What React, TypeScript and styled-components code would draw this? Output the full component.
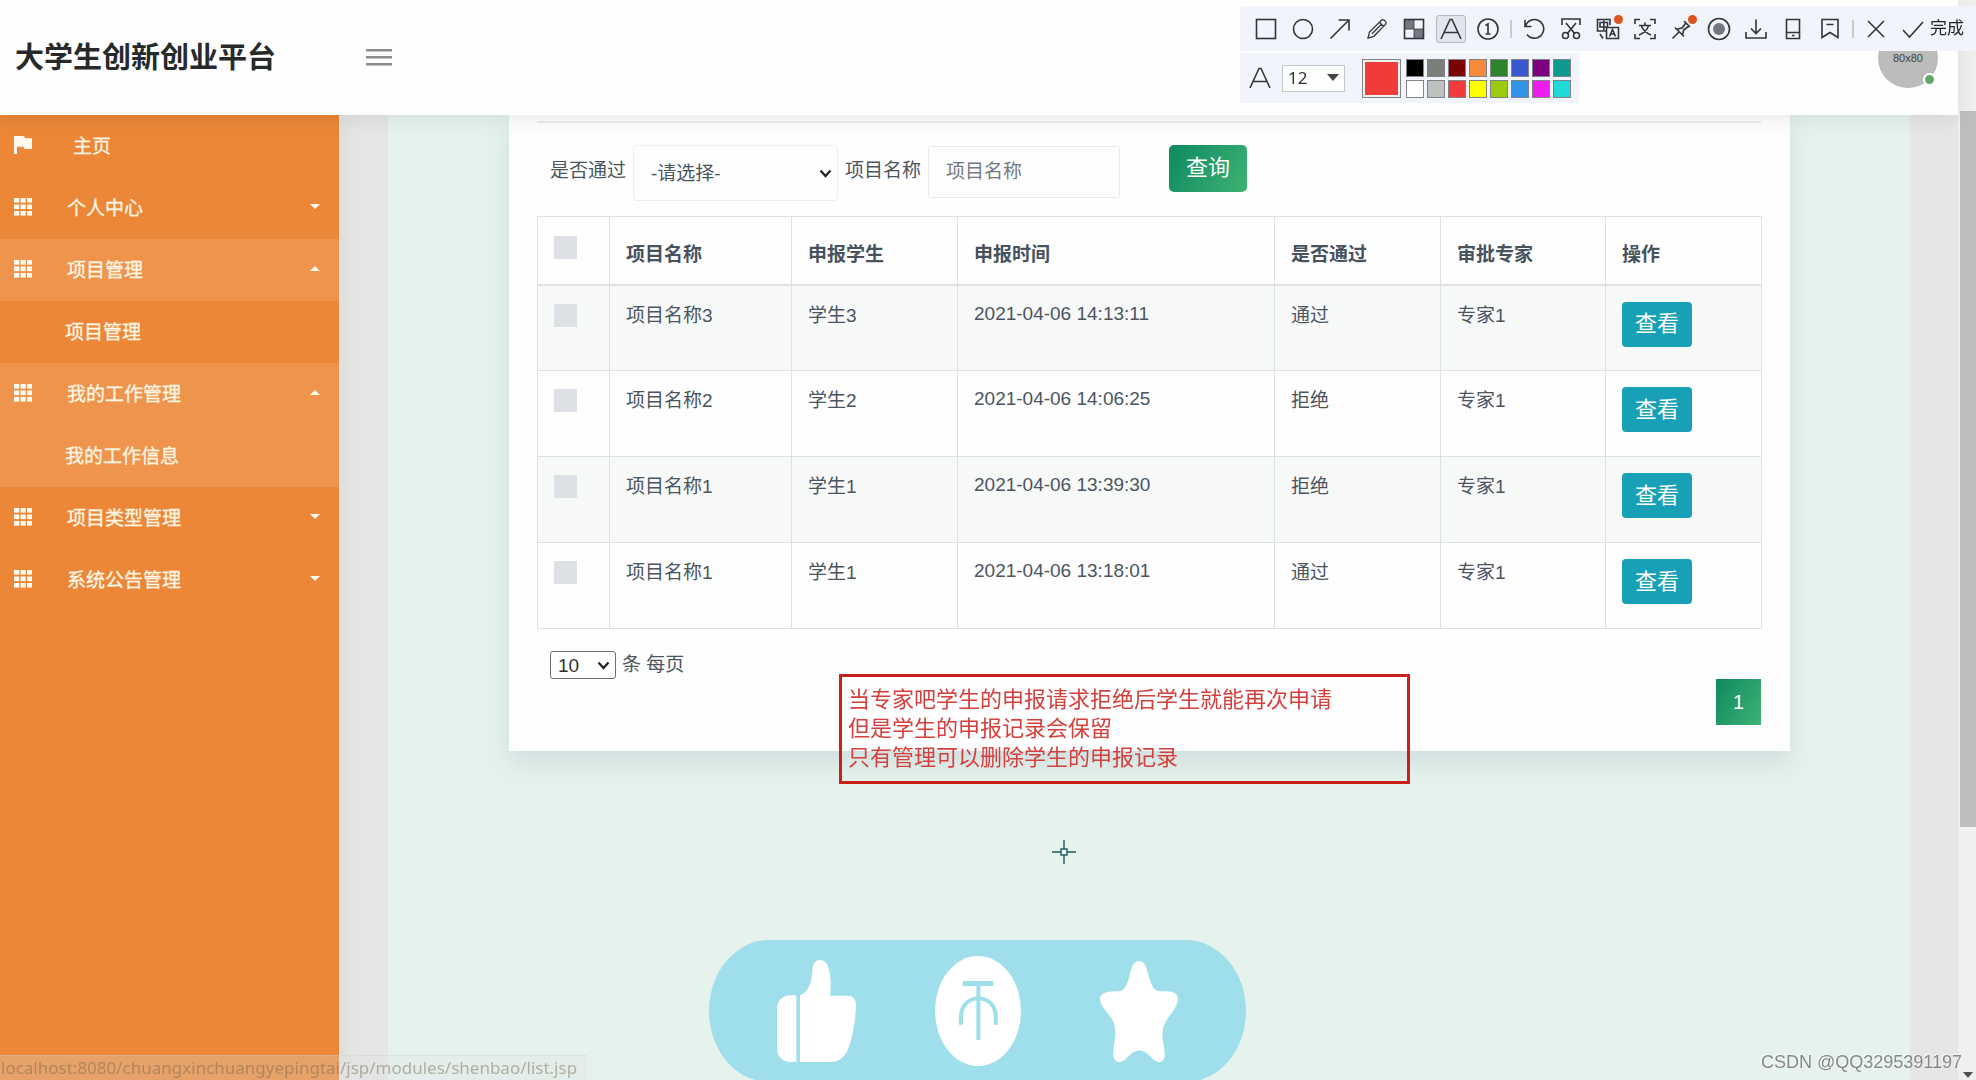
import React from "react";
import styled, { createGlobalStyle, css } from "styled-components";

const SANS = `"Liberation Sans", "Noto Sans CJK SC", sans-serif`;

const GlobalStyle = createGlobalStyle`
  *, *::before, *::after { box-sizing: border-box; }
  body { margin: 0; font-family: ${SANS}; font-size: 19px; line-height: 28px; color: #4b5560; background: #e6e6e5; }
  button, input, select { font: inherit; color: inherit; margin: 0; }
  button { cursor: pointer; }
`;

/* ---------- page frame ---------- */

const Shell = styled.div`
  display: flex;
  height: 100vh;
  overflow: hidden;
`;

const Page = styled.div`
  flex: 1;
  min-width: 0;
  display: flex;
  flex-direction: column;
`;

const ScrollTrack = styled.div`
  width: 18px;
  padding: 111px 0 2px 2px;
  background: #f0f0ef;
  display: flex;
  flex-direction: column;
  justify-content: space-between;
  align-items: center;
`;

const ScrollThumb = styled.div`
  width: 100%;
  height: 74%;
  background: #bdbebd;
`;

const Header = styled.header`
  position: relative;
  z-index: 2;
  height: 115px;
  padding: 0 20px 0 15px;
  display: flex;
  align-items: center;
  background: #fdfefd;
  box-shadow: 0 3px 20px rgba(0, 0, 0, 0.09);
`;

const Brand = styled.h1`
  margin: 0;
  width: 349px;
  font-size: 29px;
  line-height: 40px;
  font-weight: 700;
  color: #272a2b;
`;

const MenuToggle = styled.button`
  width: 30px;
  height: 30px;
  padding: 0;
  border: 0;
  background: none;
  display: grid;
  place-items: center;
`;

const Avatar = styled.div`
  position: relative;
  width: 60px;
  height: 60px;
  margin-left: auto;
  border-radius: 50%;
  background: #bcbcbb;
  display: grid;
  place-items: center;
  font-size: 11px;
  line-height: 16px;
  color: #444;
`;

const OnlineDot = styled.span`
  position: absolute;
  right: 2px;
  bottom: 2px;
  width: 13px;
  height: 13px;
  border: 2px solid #fff;
  border-radius: 50%;
  background: #64a865;
`;

const Body = styled.div`
  flex: 1;
  min-height: 0;
  display: flex;
`;

/* ---------- sidebar ---------- */

const Sidebar = styled.nav`
  position: relative;
  z-index: 1;
  width: 339px;
  background: #eb8737;
  box-shadow: 2px 0 24px rgba(0, 0, 0, 0.06);
`;

const MenuList = styled.ul`
  margin: 0;
  padding: 0;
  list-style: none;
`;

const MenuLink = styled.a<{ $lit?: boolean; $indent: number }>`
  display: flex;
  align-items: center;
  height: 62px;
  padding: 2px 19px 0 14px;
  background: ${(p) => (p.$lit ? "#ee944c" : "transparent")};
  color: #fff6e4;
  text-decoration: none;

  svg { flex: none; margin-bottom: 5px; }
  svg + span { margin-left: ${(p) => p.$indent}px; }
  span:first-child { margin-left: 51px; }
  span { flex: 1; -webkit-text-stroke: 0.3px; }
`;

/* ---------- content ---------- */

const Canvas = styled.main`
  flex: 1;
  min-width: 0;
  margin: 0 48px 0 49px;
  padding: 0 120px 0 121px;
  background: #e6f3ec;
`;

const Card = styled.section`
  padding: 6px 29px 26px 28px;
  background: #fdfefd;
  box-shadow: 0 12px 24px rgba(90, 120, 160, 0.16);
`;

const Rule = styled.hr`
  margin: 0 0 22px;
  border: 0;
  border-top: 2px solid #ececec;
`;

const SearchForm = styled.form`
  display: flex;
  align-items: flex-start;
  padding: 0 13px;
  margin-bottom: 15px;
`;

const FieldLabel = styled.label`
  line-height: 52px;
  margin-right: 7px;
`;

const SelectWrap = styled.span`
  position: relative;
  display: inline-block;
  margin-right: 7px;

  svg { position: absolute; right: 6px; top: 50%; margin-top: -4px; pointer-events: none; }
`;

const StatusSelect = styled.select`
  appearance: none;
  display: block;
  width: 205px;
  height: 56px;
  padding: 2px 17px 0;
  border: 1px solid #eceeee;
  border-radius: 4px;
  background: #fdfefd;
`;

const NameInput = styled.input`
  width: 192px;
  height: 52px;
  margin: 1px 49px 0 0;
  padding: 0 17px;
  border: 1px solid #e9ebeb;
  border-radius: 3px;
  background: #fdfefd;

  &::placeholder { color: #73797f; opacity: 1; }
`;

const greenFill = css`
  border: 0;
  color: #fff;
  background: linear-gradient(120deg, #0e8a60, #3db273);
`;

const QueryButton = styled.button`
  ${greenFill}
  width: 78px;
  height: 47px;
  padding: 0 0 2px;
  border-radius: 5px;
  font-size: 22px;
`;

const Table = styled.table`
  width: 100%;
  table-layout: fixed;
  border-collapse: collapse;

  th, td {
    border: 1px solid #dee1e4;
    padding: 16px;
    text-align: left;
    vertical-align: top;
  }
  th { height: 68px; padding-top: 24px; padding-bottom: 10px; font-weight: 700; color: #47525e; border-bottom-width: 2px; }
  td { height: 86px; padding-bottom: 10px; }
  tbody tr:nth-child(odd) { background: #f7f8f8; }
  th:first-child { padding-top: 19px; }
  td:first-child { padding-top: 18px; }
`;

const Tick = styled.input`
  appearance: none;
  display: block;
  width: 23px;
  height: 23px;
  background: #dde0e4;
`;

const Time = styled.time`
  display: block;
  line-height: 24px;
`;

const ViewButton = styled.button`
  display: block;
  width: 70px;
  height: 45px;
  padding: 0;
  border: 0;
  border-radius: 4px;
  background: #18a1b6;
  color: #fff;
  font-size: 22px;
`;

const Footer = styled.div`
  display: flex;
  align-items: flex-start;
  justify-content: space-between;
  padding: 22px 0 0 13px;
`;

const PageSize = styled.label`
  display: flex;
  align-items: center;
  gap: 6px;
`;

const SizeWrap = styled(SelectWrap)`
  margin: 0;
`;

const SizeSelect = styled.select`
  appearance: none;
  display: block;
  width: 66px;
  height: 28px;
  padding: 0 7px;
  border: 1px solid #6f7274;
  border-radius: 3px;
  background: #fff;
  color: #333;
`;

const PageButton = styled.button`
  ${greenFill}
  width: 45px;
  height: 46px;
  margin-top: 28px;
  font-size: 20px;
`;

/* ---------- screen overlays ---------- */

const Note = styled.p`
  position: fixed;
  z-index: 4;
  left: 839px;
  top: 674px;
  width: 571px;
  height: 110px;
  margin: 0;
  padding: 8px 6px;
  border: 3px solid #cb1f1c;
  font-size: 22px;
  line-height: 29px;
  color: #d4403d;
  white-space: pre-line;
`;

const Crosshair = styled.svg`
  position: fixed;
  z-index: 4;
  left: 1052px;
  top: 840px;
`;

const Reactions = styled.div`
  position: fixed;
  z-index: 4;
  left: 709px;
  bottom: -2px;
  width: 537px;
  height: 142px;
  border-radius: 60px / 71px;
  background: #9fdeeb;
  display: flex;
  align-items: center;
  justify-content: center;
  gap: 79px;
`;

const Reaction = styled.button`
  padding: 0;
  border: 0;
  background: none;

  svg { display: block; }
`;

const StatusBar = styled.div`
  position: fixed;
  z-index: 4;
  left: 0;
  bottom: 0;
  padding: 0 10px 0 1px;
  background: rgba(222, 226, 224, 0.3);
  border-top: 1px solid rgba(200, 205, 200, 0.3);
  font-family: "Noto Sans", sans-serif;
  font-size: 17px;
  line-height: 24px;
  color: rgba(110, 100, 70, 0.45);
`;

const Watermark = styled.div`
  position: fixed;
  z-index: 5;
  right: 14px;
  bottom: 6px;
  font-size: 18px;
  line-height: 24px;
  color: #858a88;
  text-shadow: -1px -1px 0 rgba(255, 255, 255, 0.7);
`;

/* ---------- annotation toolbar ---------- */

const ToolPanel = styled.div`
  position: fixed;
  z-index: 6;
  right: 0;
  top: 6px;
  width: 736px;
  display: flex;
  flex-direction: column;
  align-items: flex-start;
  gap: 2px;
`;

const ToolRow = styled.div`
  width: 100%;
  height: 45px;
  padding: 0 11px;
  display: flex;
  align-items: center;
  gap: 7px;
  background: #f1f5fb;
`;

const ToolButton = styled.button<{ $on?: boolean }>`
  position: relative;
  width: 30px;
  height: 28px;
  padding: 0;
  border: 1px solid ${(p) => (p.$on ? "#b4b8be" : "transparent")};
  border-radius: 3px;
  background: ${(p) => (p.$on ? "#e2e6ec" : "none")};
  display: grid;
  place-items: center;
  flex: none;
`;

const AlertDot = styled.span`
  position: absolute;
  right: -1px;
  top: -1px;
  width: 9px;
  height: 9px;
  border-radius: 50%;
  background: #dd5320;
`;

const ToolDivider = styled.span`
  width: 2px;
  height: 18px;
  background: #c8ccd2;
`;

const DoneButton = styled.button`
  display: flex;
  align-items: center;
  gap: 2px;
  padding: 0;
  border: 0;
  background: none;
  font-size: 17px;
  line-height: 24px;
  color: #20252d;
  white-space: nowrap;

  svg { margin: 0 3px; }
`;

const StyleRow = styled.div`
  height: 50px;
  padding: 0 8px;
  display: flex;
  align-items: center;
  background: #f1f5fb;
`;

const FontSizeWrap = styled(SelectWrap)`
  margin: 0 17px 0 10px;
`;

const FontSizeSelect = styled.select`
  appearance: none;
  display: block;
  width: 63px;
  height: 27px;
  padding: 0 5px;
  border: 1px solid #c3c7cb;
  background: #fdfefe;
  font-family: "Noto Sans", sans-serif;
  font-size: 17px;
  line-height: 24px;
  color: #333;
`;

const Swatch = styled.button<{ $color: string; $size: number }>`
  width: ${(p) => p.$size}px;
  height: ${(p) => p.$size}px;
  padding: 0;
  border: 1px solid #808388;
  background: ${(p) => p.$color};
  box-shadow: ${(p) => (p.$size > 20 ? "inset 0 0 0 2px #f1f1f1" : "none")};
`;

const Palette = styled.div`
  margin-left: 5px;
  display: grid;
  grid-template-columns: repeat(8, 18px);
  gap: 3px;
`;

/* ---------- drawings ---------- */

const Chevron = () => (
  <svg width="13" height="9" viewBox="0 0 13 9" fill="none" stroke="#222" strokeWidth="2.2">
    <path d="M1.5 1.5 6.5 7l5-5.5" />
  </svg>
);

const Grid3 = () => (
  <svg width="18" height="18" viewBox="0 0 18 18" fill="#fffaf0">
    {[0, 6.5, 13].map((y) =>
      [0, 6.5, 13].map((x) => <rect key={`${x}-${y}`} x={x} y={y} width="5.2" height="4.6" />)
    )}
  </svg>
);

const Flag = () => (
  <svg width="18" height="18" viewBox="0 0 18 18" fill="#fffaf0">
    <path d="M0 0h10l1 2.200h7V13h-7.500l-1-2.200H3V18H0z" />
  </svg>
);

const Caret = ({ up }: { up?: boolean }) => (
  <svg width="10" height="5" viewBox="0 0 10 5" fill="#fffaf0">
    <path d={up ? "M0 5 5 0l5 5z" : "M0 0l5 5 5-5z"} />
  </svg>
);

const Stroke = ({ children }: { children: React.ReactNode }) => (
  <svg width="24" height="24" viewBox="0 0 24 24" fill="none" stroke="#30353f" strokeWidth="1.6">
    {children}
  </svg>
);

const LetterA = () => (
  <Stroke>
    <path d="M2 22 11 2.500h2L22 22M5.500 15.500h13" />
  </Stroke>
);

type Tool = { name: string; art: React.ReactNode; on?: boolean; alert?: boolean };

const drawTools: Tool[] = [
  { name: "矩形", art: <Stroke><rect x="2.500" y="2.500" width="19" height="19" /></Stroke> },
  { name: "椭圆", art: <Stroke><circle cx="12" cy="12" r="9.500" /></Stroke> },
  { name: "箭头", art: <Stroke><path d="M2.500 21.500 21 3M10.500 3H21v10.500" /></Stroke> },
  { name: "画笔", art: <Stroke><path d="M3 21l1.500-6L16.500 3.200q1.500-1.200 3 .2l1 1q1.400 1.500 0 3L8.800 19.300zM14.500 5.200l4.200 4.200M16.500 7.200 7 16.800" strokeWidth="1.3" /></Stroke> },
  {
    name: "马赛克",
    art: (
      <Stroke>
        <path d="M3 3h9v9H3zM12 12h9v9h-9z" fill="#737884" stroke="none" />
        <rect x="2.500" y="2.500" width="19" height="19" />
        <path d="M12 3v18M3 12h18" strokeWidth="0.8" />
      </Stroke>
    ),
  },
  { name: "文字", art: <LetterA />, on: true },
  { name: "序号", art: <Stroke><circle cx="12" cy="12" r="10" /><path d="M9.500 8.500 12 7v10M9.500 17h5" /></Stroke> },
];

const actionTools: Tool[] = [
  { name: "撤销", art: <Stroke><path d="M3 3v6.500h6.500M3.500 9.200A9.300 9.300 0 1 1 5 17.500" /></Stroke> },
  {
    name: "裁剪",
    art: (
      <Stroke>
        <path d="M3 8V2h18v6M7 6l9 11M17 6 8 17" />
        <circle cx="6.500" cy="18.500" r="3" />
        <circle cx="17.500" cy="18.500" r="3" />
      </Stroke>
    ),
  },
  {
    name: "翻译",
    alert: true,
    art: (
      <Stroke>
        <path d="M11 14H1.500V2.500H14V8M4 5.500h7.500v4.500H4zM7.800 3.500V13M10.500 10.500h12v11h-12zM13.500 19.500l3-7 3 7M14.500 17h4M4 17l3 4.500" />
      </Stroke>
    ),
  },
  {
    name: "识别文字",
    art: (
      <Stroke>
        <path d="M2 7V2.500h5M17 2.500h5V7M22 17v4.500h-5M7 21.500H2V17M6 8.500h12M12 5.500v3M15.500 9Q13 15.500 6 18M8.500 9Q11 15.500 18 18" />
      </Stroke>
    ),
  },
  { name: "钉住", alert: true, art: <Stroke><path d="M2.500 21.500 9 15M5 10.500 14 19.500M7 12.200l5.500-1.500L16 5.500M12.500 18l1.200-5 5.300-4M14 4l6 6" /></Stroke> },
  {
    name: "录屏",
    art: (
      <Stroke>
        <circle cx="12" cy="12" r="10.500" />
        <circle cx="12" cy="12" r="6" fill="#737884" stroke="none" />
      </Stroke>
    ),
  },
  { name: "下载", art: <Stroke><path d="M12 2.500V16M7 11.500l5 5 5-5M2 15v6h20v-6" /></Stroke> },
  { name: "手机", art: <Stroke><path d="M5.500 2.500h13v19h-13zM5.500 15.500h13M11 18.500h2.500" /></Stroke> },
  { name: "收藏", art: <Stroke><path d="M4 2.500h16v18l-8-5-8 5zM8.500 7.500h7" /></Stroke> },
];

const palette = [
  "#000000", "#7b7e7c", "#7c0304", "#f58a3c", "#2c842c", "#3a59d0", "#7d017f", "#109892",
  "#ffffff", "#bfc0c0", "#f13a3a", "#ffff00", "#9acb0c", "#3194e4", "#ee1cee", "#1fdad8",
];

/* ---------- data ---------- */

type MenuItem = { text: string; icon?: "flag" | "grid"; lit?: boolean; caret?: "up" | "down" };

const menu: MenuItem[] = [
  { text: "主页", icon: "flag" },
  { text: "个人中心", icon: "grid", caret: "down" },
  { text: "项目管理", icon: "grid", caret: "up", lit: true },
  { text: "项目管理" },
  { text: "我的工作管理", icon: "grid", caret: "up", lit: true },
  { text: "我的工作信息", lit: true },
  { text: "项目类型管理", icon: "grid", caret: "down" },
  { text: "系统公告管理", icon: "grid", caret: "down" },
];

const columns = ["项目名称", "申报学生", "申报时间", "是否通过", "审批专家", "操作"];
const widths = [72, 182, 166, 317, 166, 165, 156];

const rows = [
  ["项目名称3", "学生3", "2021-04-06 14:13:11", "通过", "专家1"],
  ["项目名称2", "学生2", "2021-04-06 14:06:25", "拒绝", "专家1"],
  ["项目名称1", "学生1", "2021-04-06 13:39:30", "拒绝", "专家1"],
  ["项目名称1", "学生1", "2021-04-06 13:18:01", "通过", "专家1"],
];

const ToolSet = ({ tools }: { tools: Tool[] }) => (
  <>
    {tools.map((t) => (
      <ToolButton key={t.name} type="button" aria-label={t.name} $on={t.on}>
        {t.art}
        {t.alert && <AlertDot />}
      </ToolButton>
    ))}
  </>
);

export default function App() {
  return (
    <>
      <GlobalStyle />
      <Shell>
        <Page>
          <Header>
            <Brand>大学生创新创业平台</Brand>
            <MenuToggle type="button" aria-label="菜单">
              <svg width="26" height="18" viewBox="0 0 26 18" fill="#8b8d8c">
                <path d="M0 0h26v2.500H0zM0 7h26v2.500H0zM0 14h26v2.500H0z" />
              </svg>
            </MenuToggle>
            <Avatar>
              80x80
              <OnlineDot />
            </Avatar>
          </Header>
          <Body>
            <Sidebar>
              <MenuList>
                {menu.map((m, i) => (
                  <li key={i}>
                    <MenuLink href="#" $lit={m.lit} $indent={m.icon === "flag" ? 41 : 35}>
                      {m.icon === "flag" && <Flag />}
                      {m.icon === "grid" && <Grid3 />}
                      <span>{m.text}</span>
                      {m.caret && <Caret up={m.caret === "up"} />}
                    </MenuLink>
                  </li>
                ))}
              </MenuList>
            </Sidebar>
            <Canvas>
              <Card>
                <Rule />
                <SearchForm onSubmit={(e) => e.preventDefault()}>
                  <FieldLabel htmlFor="passed">是否通过</FieldLabel>
                  <SelectWrap>
                    <StatusSelect id="passed">
                      <option>-请选择-</option>
                      <option>通过</option>
                      <option>拒绝</option>
                    </StatusSelect>
                    <Chevron />
                  </SelectWrap>
                  <FieldLabel htmlFor="project">项目名称</FieldLabel>
                  <NameInput id="project" placeholder="项目名称" />
                  <QueryButton type="submit">查询</QueryButton>
                </SearchForm>
                <Table>
                  <colgroup>
                    {widths.map((w, i) => (
                      <col key={i} width={w} />
                    ))}
                  </colgroup>
                  <thead>
                    <tr>
                      <th><Tick type="checkbox" aria-label="全选" /></th>
                      {columns.map((c) => (
                        <th key={c}>{c}</th>
                      ))}
                    </tr>
                  </thead>
                  <tbody>
                    {rows.map((r) => (
                      <tr key={r[2]}>
                        <td><Tick type="checkbox" aria-label={r[0]} /></td>
                        <td>{r[0]}</td>
                        <td>{r[1]}</td>
                        <td><Time>{r[2]}</Time></td>
                        <td>{r[3]}</td>
                        <td>{r[4]}</td>
                        <td><ViewButton type="button">查看</ViewButton></td>
                      </tr>
                    ))}
                  </tbody>
                </Table>
                <Footer>
                  <PageSize>
                    <SizeWrap>
                      <SizeSelect>
                        <option>10</option>
                        <option>25</option>
                      </SizeSelect>
                      <Chevron />
                    </SizeWrap>
                    条 每页
                  </PageSize>
                  <PageButton type="button">1</PageButton>
                </Footer>
              </Card>
            </Canvas>
          </Body>
        </Page>
        <ScrollTrack>
          <ScrollThumb />
          <svg width="10" height="6" viewBox="0 0 10 6" fill="#505050">
            <path d="M0 0h10L5 6z" />
          </svg>
        </ScrollTrack>
      </Shell>

      <Note>{"当专家吧学生的申报请求拒绝后学生就能再次申请\n但是学生的申报记录会保留\n只有管理可以删除学生的申报记录"}</Note>

      <Crosshair width="24" height="24" viewBox="0 0 24 24" fill="none" stroke="#245560" strokeWidth="1.4">
        <path d="M12 0v9M12 15v9M0 12h9M15 12h9" />
        <rect x="9" y="9" width="6" height="6" fill="#dff5f2" />
      </Crosshair>

      <Reactions>
        <Reaction type="button" aria-label="点赞">
          <svg width="79" height="102" viewBox="235 420 213 306" preserveAspectRatio="none" fill="#fff">
            <path d="M287 526h-18q-34 4-34 44v112q0 40 36 44h16z" />
            <path d="M297 526c24-10 32-40 34-80 2-34 34-34 42-6q10 34 5 87h48q22 2 22 26-2 72-18 124-12 44-46 49h-87z" />
          </svg>
        </Reaction>
        <Reaction type="button" aria-label="投币">
          <svg width="86" height="110" viewBox="661 408 232 330" preserveAspectRatio="none">
            <ellipse cx="777" cy="573" rx="116" ry="165" fill="#fff" />
            <path d="M736 483h82v15h-82z" fill="#9fdeeb" />
            <path d="M778 490v170M731 614v-22c0-76 94-76 94 0v22" fill="none" stroke="#9fdeeb" strokeWidth="11" />
          </svg>
        </Reaction>
        <Reaction type="button" aria-label="收藏">
          <svg width="78" height="101" viewBox="1108 426 212 301" preserveAspectRatio="none" fill="#fff">
            <path d="M1194 446c8-27 32-27 40 0 10 36 14 70 38 70 28-1 42 2 46 14 8 30-22 56-34 82-12 30-4 50 0 88 2 28-18 36-34 16-24-31-46-31-70 0-16 20-38 12-36-16 4-44 10-66 0-94-12-26-38-46-36-70 4-18 26-20 52-20 22-2 26-40 34-70z" />
          </svg>
        </Reaction>
      </Reactions>

      <StatusBar>localhost:8080/chuangxinchuangyepingtai/jsp/modules/shenbao/list.jsp</StatusBar>
      <Watermark>CSDN @QQ3295391197</Watermark>

      <ToolPanel>
        <ToolRow>
          <ToolSet tools={drawTools} />
          <ToolDivider />
          <ToolSet tools={actionTools} />
          <ToolDivider />
          <ToolButton type="button" aria-label="关闭">
            <Stroke><path d="M4 4l16 16M20 4 4 20" /></Stroke>
          </ToolButton>
          <DoneButton type="button">
            <Stroke><path d="M2 13l6.500 7L22 5" /></Stroke>
            完成
          </DoneButton>
        </ToolRow>
        <StyleRow>
          <LetterA />
          <FontSizeWrap>
            <FontSizeSelect aria-label="字号">
              <option>12</option>
              <option>14</option>
            </FontSizeSelect>
            <svg width="12" height="7" viewBox="0 0 12 7" fill="#444">
              <path d="M0 0h12L6 7z" />
            </svg>
          </FontSizeWrap>
          <Swatch type="button" aria-label="当前颜色" $color="#f13a3a" $size={39} />
          <Palette>
            {palette.map((c) => (
              <Swatch key={c} type="button" aria-label={c} $color={c} $size={18} />
            ))}
          </Palette>
        </StyleRow>
      </ToolPanel>
    </>
  );
}
